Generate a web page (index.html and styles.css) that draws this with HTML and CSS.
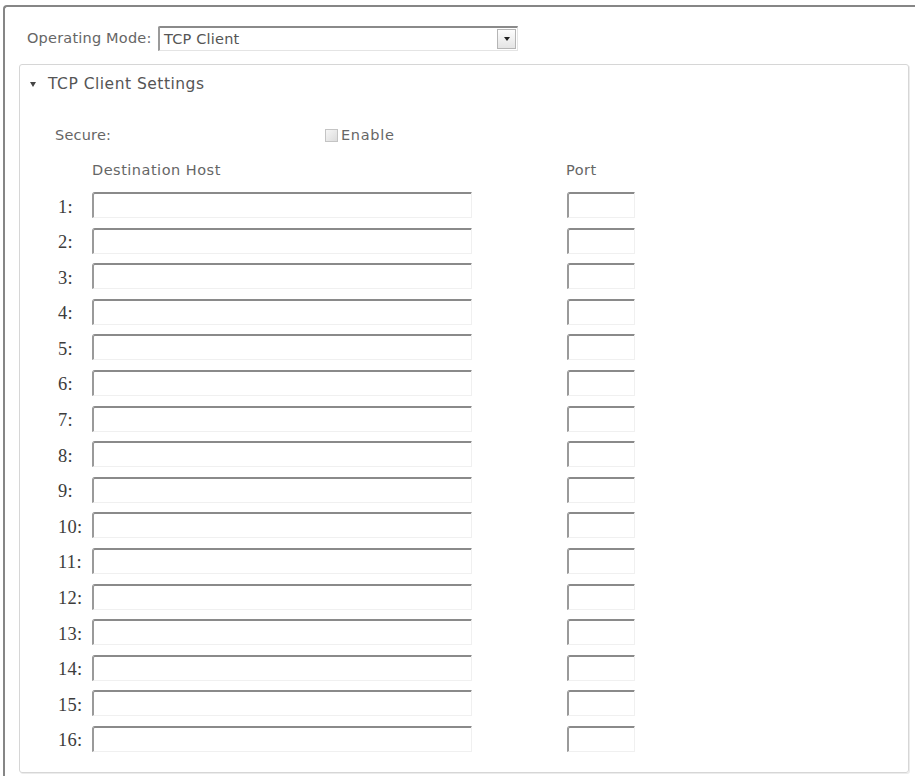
FILE: index.html
```html
<!DOCTYPE html>
<html lang="en">

<head>
  <meta charset="UTF-8" />
  <meta name="viewport" content="width=device-width, initial-scale=1.0" />
  <title>TCP Client Settings</title>
  <link rel="stylesheet" href="styles.css">
</head>

<body>
  <div class="frame">
    <div class="mode-row">
      <span class="mode-label">Operating Mode:</span>
      <div class="mode-select">
        <span class="mode-value">TCP Client</span>
        <span class="mode-btn"><span class="mode-arrow"></span></span>
      </div>
    </div>

    <div class="panel">
      <div class="panel-title"><span class="caret"></span>TCP Client Settings</div>

      <div class="secure-row">
        <span class="secure-label">Secure:</span>
        <label class="enable"><input type="checkbox" class="check" />Enable</label>
      </div>

      <div class="hosts-head">
        <span class="head-host">Destination Host</span>
        <span class="head-port">Port</span>
      </div>

      <div class="hosts">
        <span class="num">1:</span><input type="text" class="host" /><input type="text" class="port" />
        <span class="num">2:</span><input type="text" class="host" /><input type="text" class="port" />
        <span class="num">3:</span><input type="text" class="host" /><input type="text" class="port" />
        <span class="num">4:</span><input type="text" class="host" /><input type="text" class="port" />
        <span class="num">5:</span><input type="text" class="host" /><input type="text" class="port" />
        <span class="num">6:</span><input type="text" class="host" /><input type="text" class="port" />
        <span class="num">7:</span><input type="text" class="host" /><input type="text" class="port" />
        <span class="num">8:</span><input type="text" class="host" /><input type="text" class="port" />
        <span class="num">9:</span><input type="text" class="host" /><input type="text" class="port" />
        <span class="num">10:</span><input type="text" class="host" /><input type="text" class="port" />
        <span class="num">11:</span><input type="text" class="host" /><input type="text" class="port" />
        <span class="num">12:</span><input type="text" class="host" /><input type="text" class="port" />
        <span class="num">13:</span><input type="text" class="host" /><input type="text" class="port" />
        <span class="num">14:</span><input type="text" class="host" /><input type="text" class="port" />
        <span class="num">15:</span><input type="text" class="host" /><input type="text" class="port" />
        <span class="num">16:</span><input type="text" class="host" /><input type="text" class="port" />
      </div>
    </div>
  </div>
</body>

</html>
```

FILE: styles.css
```css
body {
  margin: 0;
  background: #fff;
  font-family: "DejaVu Sans", Verdana, sans-serif;
  font-size: 14.5px;
  letter-spacing: 0.2px;
  color: #666;
  overflow: hidden;
}

.frame {
  margin: 5px 0 0 3px;
  border-top: 2px solid #868686;
  border-left: 2px solid #868686;
  border-top-left-radius: 4px;
  padding: 19px 6px 0 14px;
  height: 776px;
}

.mode-row {
  display: flex;
  align-items: center;
  height: 24px;
}

.mode-label {
  margin-left: 8px;
  width: 131px;
}

.mode-select {
  display: flex;
  align-items: center;
  width: 357px;
  height: 22px;
  border-top: 2px solid #8a8a8a;
  border-left: 2px solid #9a9a9a;
  border-right: 1px solid #e4e4e4;
  border-bottom: 1px solid #e4e4e4;
  border-top-left-radius: 2px;
}

.mode-value {
  flex: 1;
  padding-left: 4px;
  color: #555;
}

.mode-btn {
  width: 17px;
  height: 18px;
  margin-right: 1px;
  border: 1px solid #b5b5b5;
  background: linear-gradient(#fdfdfd, #e4e4e4);
  display: flex;
  align-items: center;
  justify-content: center;
}

.mode-arrow {
  width: 0;
  height: 0;
  border-left: 3px solid transparent;
  border-right: 3px solid transparent;
  border-top: 4px solid #222;
}

.panel {
  margin-top: 14px;
  height: 709px;
  border: 1px solid #d6d6d6;
  border-radius: 3px;
  box-shadow: 1px 1px 0 #ececec;
  box-sizing: border-box;
}

.panel-title {
  display: flex;
  align-items: center;
  padding: 10px 0 0 10px;
  height: 18px;
  font-size: 15.5px;
  letter-spacing: 0.5px;
  color: #555;
}

.caret {
  width: 0;
  height: 0;
  margin-right: 12px;
  border-left: 3px solid transparent;
  border-right: 3px solid transparent;
  border-top: 5px solid #444;
}

.secure-row {
  display: flex;
  align-items: center;
  margin-top: 33px;
  height: 18px;
}

.secure-label {
  margin-left: 35px;
  width: 270px;
}

.enable {
  display: flex;
  align-items: center;
  letter-spacing: 0.7px;
}

.check {
  appearance: none;
  margin: 0 3px 0 0;
  width: 13px;
  height: 13px;
  border: 1px solid #c4c4c4;
  background: linear-gradient(135deg, #f6f6f6, #dcdcdc);
  box-sizing: border-box;
}

.hosts-head {
  display: flex;
  align-items: center;
  margin-top: 17px;
  height: 18px;
  letter-spacing: 0.5px;
}

.head-host {
  margin-left: 72px;
  width: 474px;
}

.hosts {
  display: grid;
  grid-template-columns: 72px 475px 68px;
  grid-auto-rows: 26px;
  row-gap: 9.6px;
  margin-top: 13px;
  align-items: center;
}

.num {
  padding-left: 38px;
  font-family: "Liberation Serif", serif;
  font-size: 18.5px;
  letter-spacing: 0.3px;
  color: #3c3c3c;
  transform: translateY(2px);
}

.host,
.port {
  margin: 0;
  padding: 0 4px;
  height: 26px;
  box-sizing: border-box;
  border-top: 2px solid #8a8a8a;
  border-left: 2px solid #9a9a9a;
  border-right: 1px solid #f0f0f0;
  border-bottom: 1px solid #f0f0f0;
  border-top-left-radius: 3px;
  background: #fff;
  outline: none;
}

.host {
  width: 380px;
}

.port {
  width: 68px;
}
```
